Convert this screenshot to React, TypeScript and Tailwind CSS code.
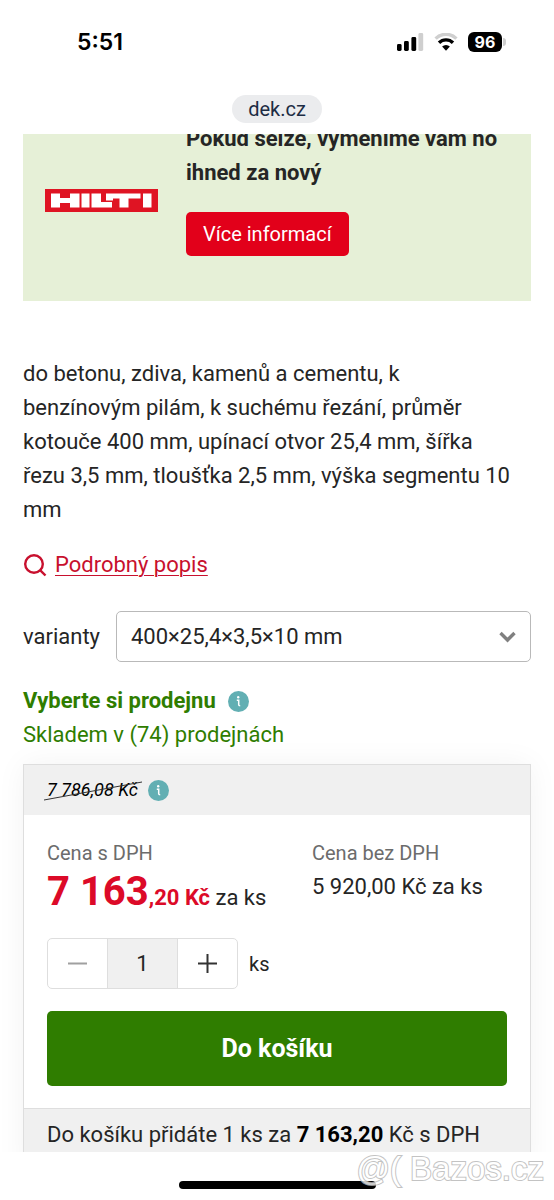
import React, { useState } from 'react';

const description =
  'do betonu, zdiva, kamenů a cementu, k benzínovým pilám, k suchému řezání, průměr kotouče 400 mm, upínací otvor 25,4 mm, šířka řezu 3,5 mm, tloušťka 2,5 mm, výška segmentu 10 mm';

function StatusIcons() {
  return (
    <div className="flex items-center gap-2.5">
      <svg width="28" height="18" viewBox="0 0 28 18" aria-hidden="true">
        <rect x="1" y="11" width="4.6" height="7" rx="1.4" fill="#000" />
        <rect x="8" y="8" width="4.8" height="10" rx="1.4" fill="#000" />
        <rect x="15.4" y="4" width="4.8" height="14" rx="1.4" fill="#000" />
        <rect x="22.4" y="0" width="4.8" height="18" rx="1.4" fill="#cfcfcf" />
      </svg>
      <svg width="24" height="18" viewBox="0 0 24 18" fill="none" aria-hidden="true">
        <path d="M1.600 5.600A14.800 14.800 0 0 1 22.400 5.600" stroke="#cfcfcf" strokeWidth="3.400" />
        <path d="M5 9.700A10 10 0 0 1 19 9.700" stroke="#000" strokeWidth="3.400" />
        <path d="M8.100 13.600a5.600 5.600 0 0 1 7.800 0L12 17.800z" fill="#000" />
      </svg>
      <div className="flex items-center gap-px">
        <span className="flex h-5 w-[34px] items-center justify-center rounded-md bg-black font-['Inter',sans-serif] text-base font-bold text-white">
          96
        </span>
        <span className="h-2 w-[3px] rounded-r-full bg-[#cfcfcf]" />
      </div>
    </div>
  );
}

function HiltiLogo() {
  return (
    <svg className="w-[113px] shrink-0" viewBox="0 0 113 23" role="img" aria-label="Hilti">
      <rect width="113" height="23" fill="#df1423" />
      <path
        fill="#fff"
        d="M6 4.500h9v4.500h10V4.500h9.500v14H25V14H15v4.500H6zM36.500 4.500h8v14h-8zM46.500 4.500h9.500v8.500h11v5.500H46.500zM61 4.500h34.500v5H83.500v9h-9v-9H68v2h-7zM98 4.500h8.500v14H98z"
      />
    </svg>
  );
}

function InfoButton({ label }: { label: string }) {
  return (
    <button type="button" aria-label={label}>
      <svg width="21" height="21" viewBox="0 0 21 21" aria-hidden="true">
        <circle cx="10.5" cy="10.5" r="10.5" fill="#62afb3" />
        <circle cx="10.2" cy="6.3" r="1.2" fill="#fff" />
        <path d="M8.800 9.200h1.900v4.600q0 1 1.500 1" stroke="#fff" strokeWidth="1.500" fill="none" />
      </svg>
    </button>
  );
}

export default function App() {
  const [count, setCount] = useState(1);

  return (
    <div className="flex h-screen flex-col overflow-hidden bg-white font-['Roboto',sans-serif] text-[22px] leading-[34px] text-[#252525]">
      <header className="flex shrink-0 flex-col items-center pt-7 pb-[11px]">
        <div className="flex h-7 w-full items-center justify-between pr-12 pl-[77px]">
          <span className="font-['Inter',sans-serif] text-[23px] font-semibold text-black">5:51</span>
          <StatusIcons />
        </div>
        <div className="mt-[39px] flex h-7 items-center rounded-full bg-[#ebecee] px-4 text-[20px] text-[#1d2c44]">
          dek.cz
        </div>
      </header>

      <main className="min-h-0 flex-1 overflow-hidden px-[23px]">
        <section className="flex h-[167px] items-end gap-7 overflow-hidden bg-[#e6f0d7] pb-[45px] pl-[22px]">
          <div className="flex h-28 items-center">
            <HiltiLogo />
          </div>
          <div className="flex-1">
            <h2 className="font-bold">Pokud selže, vyměníme vám ho ihned za nový</h2>
            <button type="button" className="mt-[22px] block h-11 rounded-[5px] bg-[#e2001a] px-[17px] text-[20px] text-white">
              Více informací
            </button>
          </div>
        </section>

        <p className="mt-14 pr-4">{description}</p>

        <a href="#popis" className="mt-[21px] inline-flex items-center gap-2 text-[#c8102e]">
          <svg width="24" height="24" viewBox="0 0 24 24" fill="none" stroke="currentColor" strokeWidth="2.4" aria-hidden="true">
            <circle cx="11" cy="11" r="8.800" />
            <path d="M17.300 17.300l5.200 5.200" />
          </svg>
          <span className="underline decoration-1 underline-offset-[3px]">Podrobný popis</span>
        </a>

        <div className="mt-6 flex items-center gap-4">
          <label htmlFor="variant">varianty</label>
          <div className="relative flex-1">
            <select id="variant" className="block h-[51px] w-full appearance-none rounded-[5px] border border-[#b9b9b9] bg-white pl-[14px]">
              <option>400×25,4×3,5×10 mm</option>
            </select>
            <svg className="pointer-events-none absolute top-5 right-[15px]" width="17" height="12" viewBox="0 0 17 12" aria-hidden="true">
              <path d="M1.500 2l7 7 7-7" fill="none" stroke="#808080" strokeWidth="3.400" />
            </svg>
          </div>
        </div>

        <div className="mt-[22px] text-[#2f7d00]">
          <div className="flex items-center gap-3">
            <strong className="font-bold">Vyberte si prodejnu</strong>
            <InfoButton label="Informace o prodejnách" />
          </div>
          <p>Skladem v (74) prodejnách</p>
        </div>

        <section className="mt-3 border border-[#dedede] bg-white shadow-[0_0_28px_rgba(0,0,0,0.05)]">
          <div className="flex h-[50px] items-center gap-2.5 bg-[#f0f0f0] pl-[23px]">
            <del className="relative text-[18px] text-black italic no-underline">
              7 786,08 Kč
              <svg className="absolute -left-[3px] top-2 h-5 w-[98px]" viewBox="0 0 98 20" aria-hidden="true">
                <path d="M0 19L98 1" stroke="#333" />
              </svg>
            </del>
            <InfoButton label="Informace o původní ceně" />
          </div>

          <div className="px-[23px] pt-[21px] pb-[22px]">
            <div className="grid grid-cols-[265px_1fr]">
              <div>
                <p className="text-[20px] text-[#6c6c6c]">Cena s DPH</p>
                <p className="h-11 leading-[44px] whitespace-nowrap">
                  <strong className="font-bold text-[#dc0a28]">
                    <span className="text-[40px]">7 163</span>,20 Kč
                  </strong>{' '}
                  za ks
                </p>
              </div>
              <div>
                <p className="text-[20px] text-[#6c6c6c]">Cena bez DPH</p>
                <p>5 920,00 Kč za ks</p>
              </div>
            </div>

            <div className="mt-6 flex items-center gap-[11px]">
              <div className="flex h-[51px] w-[191px] overflow-hidden rounded-[5px] border border-[#dedede]">
                <button
                  type="button"
                  aria-label="Ubrat"
                  className="flex flex-1 items-center justify-center"
                  onClick={() => setCount(Math.max(1, count - 1))}
                >
                  <svg width="19" height="19" viewBox="0 0 19 19" aria-hidden="true">
                    <path d="M0 9.500h19" stroke="#a0a0a0" strokeWidth="2" />
                  </svg>
                </button>
                <input
                  id="count"
                  type="text"
                  value={count}
                  onChange={(e) => setCount(Number(e.target.value) || 1)}
                  className="w-[71px] border-x border-[#dedede] bg-[#f0f0f0] text-center"
                />
                <button
                  type="button"
                  aria-label="Přidat"
                  className="flex flex-1 items-center justify-center"
                  onClick={() => setCount(count + 1)}
                >
                  <svg width="19" height="19" viewBox="0 0 19 19" aria-hidden="true">
                    <path d="M0 9.500h19M9.500 0v19" stroke="#333" strokeWidth="2" />
                  </svg>
                </button>
              </div>
              <label htmlFor="count" className="text-[20px]">ks</label>
            </div>

            <button type="button" className="mt-[22px] block h-[75px] w-full rounded-[5px] bg-[#2f7d00] text-[25px] font-bold text-white">
              Do košíku
            </button>
          </div>

          <p className="border-t border-[#dedede] bg-[#f0f0f0] px-[23px] pt-[9px] pb-6 whitespace-nowrap">
            Do košíku přidáte 1 ks za <strong className="font-bold text-black">7 163,20</strong> Kč s DPH
          </p>
        </section>
      </main>

      <footer className="relative flex h-12 shrink-0 justify-center">
        <div className="mt-[29px] h-2 w-[197px] rounded-full bg-black" />
        <span className="absolute top-0 right-2.5 font-['Liberation_Sans',sans-serif] text-[33px] whitespace-pre text-white opacity-80 [paint-order:stroke_fill] [-webkit-text-stroke:2px_#b5b5b5]">
          @( Bazos.cz
        </span>
      </footer>
    </div>
  );
}
